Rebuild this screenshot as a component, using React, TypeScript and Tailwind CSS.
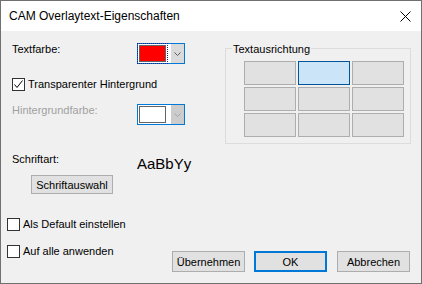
import type { ReactNode } from 'react'

const font = "font-['Liberation_Sans',Arial,sans-serif]"

function Chevron({ color }: { color: string }) {
  return (
    <svg width="7" height="4" viewBox="0 0 7 4" className="block">
      <path d="M0.5 0.5 L3.5 3.5 L6.5 0.5" fill="none" stroke={color} strokeWidth="1" />
    </svg>
  )
}

function Checkbox({ checked, label }: { checked?: boolean; label: string }) {
  return (
    <div className="flex h-4 items-center gap-[3px] leading-4">
      <div className="flex h-[13px] w-[13px] items-center justify-center border border-[#333333] bg-white">
        {checked && (
          <svg width="11" height="11" viewBox="0 0 11 11" className="block">
            <path d="M1.5 5.5 L4 8.5 L9.5 1.5" fill="none" stroke="#000" strokeWidth="1" />
          </svg>
        )}
      </div>
      <span>{label}</span>
    </div>
  )
}

// Farbauswahl-Combobox (Swatch + Dropdown-Pfeil)
function ColorCombo({ color, focused }: { color: string; focused?: boolean }) {
  return (
    <div className="mt-[2px] flex h-[21px] w-[48px] border border-[#0078d7] bg-white">
      {focused ? (
        <div className="-my-px -ml-px h-[21px] w-[31px] border border-dotted border-[#23237a]">
          <div className="ml-px mt-px h-[17px] w-[27px] border border-[#646464]" style={{ background: color }} />
        </div>
      ) : (
        <div className="h-[19px] w-[30px]">
          <div className="ml-px mt-px h-[17px] w-[27px] border border-[#646464]" style={{ background: color }} />
        </div>
      )}
      <div
        className={`ml-[3px] flex h-[19px] w-[13px] items-center justify-center ${
          focused ? 'bg-[#dadada]' : 'bg-[#cccccc]'
        }`}
      >
        <Chevron color={focused ? '#5d5d5d' : '#a6a6a6'} />
      </div>
    </div>
  )
}

function Button({ children, primary, className = '' }: { children: ReactNode; primary?: boolean; className?: string }) {
  return (
    <div
      className={`flex items-center justify-center bg-[#e1e1e1] leading-4 ${
        primary ? 'border-2 border-[#0078d7]' : 'border border-[#adadad]'
      } ${className}`}
    >
      {children}
    </div>
  )
}

export default function App() {
  const cells = [0, 1, 2, 3, 4, 5, 6, 7, 8]

  return (
    <div className={`flex h-[284px] w-[422px] flex-col border border-[#707070] text-[11px] text-black ${font}`}>
      {/* Titelleiste */}
      <div className="flex h-[30px] items-start justify-between bg-white">
        <span className="ml-[8px] mt-[7px] text-[12px] leading-4">CAM Overlaytext-Eigenschaften</span>
        <svg width="11" height="11" viewBox="0 0 11 11" className="mr-[10px] mt-[10px] block">
          <path d="M0.5 0.5 L10.5 10.5 M10.5 0.5 L0.5 10.5" stroke="#000" strokeWidth="1" />
        </svg>
      </div>

      {/* Client-Bereich */}
      <div className="flex flex-1 flex-col bg-[#f0f0f0]">
        <div className="flex">
          <div className="flex w-[224px] flex-col">
            <div className="mt-[10px] flex items-start">
              <span className="ml-[11px] w-[125px] leading-4">Textfarbe:</span>
              <ColorCombo color="#ff0000" focused />
            </div>

            <div className="ml-[11px] mt-[12px]">
              <Checkbox checked label="Transparenter Hintergrund" />
            </div>

            <div className="mt-[10px] flex items-start">
              <span className="ml-[11px] w-[125px] leading-4 text-[#a0a0a0]">Hintergrundfarbe:</span>
              <ColorCombo color="#ffffff" />
            </div>

            <div className="mt-[26px] flex items-start">
              <span className="ml-[11px] w-[125px] leading-4">Schriftart:</span>
              <span className="mt-[5px] text-[15px] leading-none">AaBbYy</span>
            </div>

            <Button className="ml-[30px] mt-[4px] h-[19px] w-[82px]">Schriftauswahl</Button>

            <div className="ml-[6px] mt-[22px]">
              <Checkbox label="Als Default einstellen" />
            </div>
          </div>

          {/* Textausrichtung */}
          <div className="relative mt-[17px] h-[96px] w-[186px] border border-[#dcdcdc] pl-[18px] pt-[12px]">
            <span className="absolute -top-[8px] left-[6px] bg-[#f0f0f0] px-px leading-4">Textausrichtung</span>
            <div className="grid grid-cols-[repeat(3,52px)] gap-[2px]">
              {cells.map(i => (
                <div
                  key={i}
                  className={`h-[24px] border ${
                    i === 1 ? 'border-[#005499] bg-[#cce4f7]' : 'border-[#adadad] bg-[#e1e1e1]'
                  }`}
                />
              ))}
            </div>
          </div>
        </div>

        <div className="flex items-start">
          <div className="ml-[6px] mt-[11px]">
            <Checkbox label="Auf alle anwenden" />
          </div>
          <div className="ml-auto mr-[11px] mt-[19px] flex">
            <Button className="h-[21px] w-[73px]">Übernehmen</Button>
            <Button primary className="ml-[9px] h-[21px] w-[73px]">OK</Button>
            <Button className="ml-[10px] h-[21px] w-[73px]">Abbrechen</Button>
          </div>
        </div>
      </div>
    </div>
  )
}
